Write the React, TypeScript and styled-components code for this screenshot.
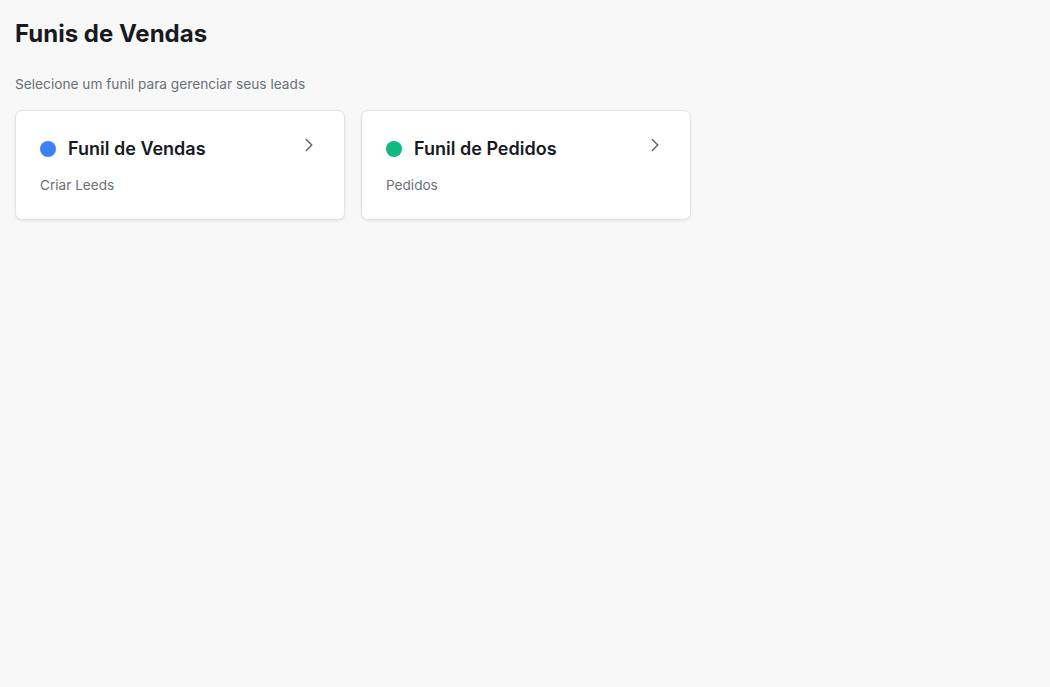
import React from "react";
import styled, { createGlobalStyle } from "styled-components";
import { ChevronRight } from "lucide-react";

const Global = createGlobalStyle`
  html, body { margin: 0; padding: 0; background: #f8f8f8; }
  body { font-family: Inter, "Noto Sans", sans-serif; color: #18181b; }
`;

const Page = styled.div`
  padding: 18px 15px;
`;

const Title = styled.h1`
  margin: 0;
  font-size: 24px;
  line-height: 32px;
  font-weight: 700;
  color: #171a1f;
`;

const Subtitle = styled.p`
  margin: 24px 0 16px;
  font-size: 13.7px;
  line-height: 20px;
  color: #6b6f76;
`;

const Grid = styled.div`
  display: grid;
  grid-template-columns: repeat(3, 330px);
  gap: 16px;
`;

const Card = styled.div`
  background: #fff;
  border: 1px solid #e3e3e3;
  border-radius: 7px;
  box-shadow: 0 1px 3px rgba(0, 0, 0, 0.08);
  padding: 24px;
  cursor: pointer;
`;

const Head = styled.div`
  display: flex;
  align-items: flex-start;
  justify-content: space-between;
`;

const NameRow = styled.div`
  display: flex;
  align-items: center;
  gap: 12px;
`;

const Dot = styled.span<{ $color: string }>`
  width: 16px;
  height: 16px;
  border-radius: 50%;
  background: ${(p) => p.$color};
  flex: none;
`;

const Name = styled.h3`
  margin: 0;
  font-size: 18px;
  line-height: 28px;
  font-weight: 600;
  color: #171a1f;
`;

const Chevron = styled(ChevronRight)`
  color: #5f6369;
  margin-top: -1px;
  flex: none;
`;

const Desc = styled.p`
  margin: 12px 0 0;
  font-size: 13.6px;
  line-height: 20px;
  color: #6b6f76;
`;

const funnels = [
  { name: "Funil de Vendas", desc: "Criar Leeds", color: "#3b82f6" },
  { name: "Funil de Pedidos", desc: "Pedidos", color: "#10b981" },
];

export default function App() {
  return (
    <>
      <Global />
      <Page>
        <Title>Funis de Vendas</Title>
        <Subtitle>Selecione um funil para gerenciar seus leads</Subtitle>
        <Grid>
          {funnels.map((f) => (
            <Card key={f.name}>
              <Head>
                <NameRow>
                  <Dot $color={f.color} />
                  <Name>{f.name}</Name>
                </NameRow>
                <Chevron size={22} strokeWidth={1.6} />
              </Head>
              <Desc>{f.desc}</Desc>
            </Card>
          ))}
        </Grid>
      </Page>
    </>
  );
}
